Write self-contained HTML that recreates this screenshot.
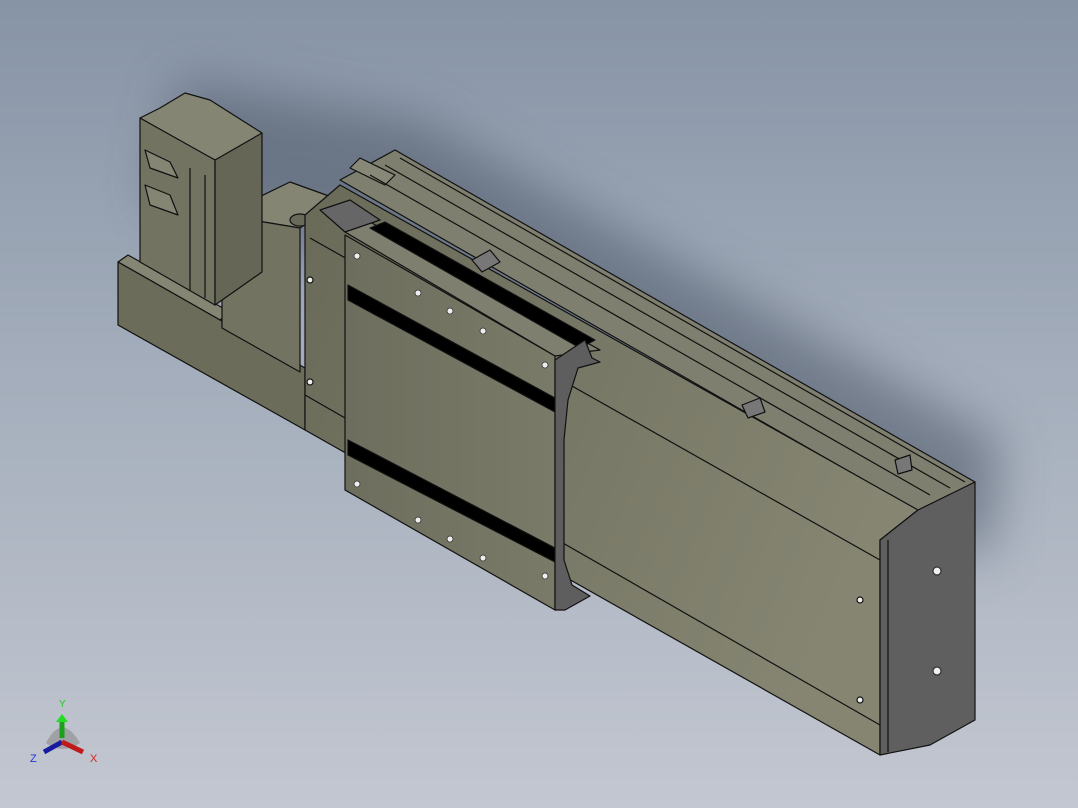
<!DOCTYPE html>
<html><head><style>
html,body{margin:0;padding:0;}
body{width:1078px;height:808px;overflow:hidden;background:linear-gradient(180deg,#8794a6 0%,#a3adbb 45%,#c3c7d1 100%);font-family:"Liberation Sans",sans-serif;}
svg{position:absolute;left:0;top:0;}
</style></head><body>
<svg width="1078" height="808" viewBox="0 0 1078 808">
<defs>
<filter id="bl" x="-20%" y="-20%" width="140%" height="140%"><feGaussianBlur stdDeviation="25"/></filter>
<linearGradient id="face" x1="0" y1="0" x2="1" y2="0.4"><stop offset="0" stop-color="#6a6a59"/><stop offset="1" stop-color="#858572"/></linearGradient>
<linearGradient id="car" x1="0" y1="0" x2="1" y2="0"><stop offset="0" stop-color="#6e6e5e"/><stop offset="1" stop-color="#7a7a68"/></linearGradient>
</defs>
<polygon points="180,80 420,120 1000,440 990,560 300,250 150,200" fill="#4f5a6b" opacity="0.6" filter="url(#bl)"/>
<g stroke="#111" stroke-width="1.2" stroke-linejoin="round">
<polygon points="118,262 128,255 230,312 220,320" fill="#858574"/>
<polygon points="118,262 220,320 305,368 305,430 118,325" fill="#6c6c5b"/>
<polygon points="222,215 290,182 340,200 300,228" fill="#858574"/>
<polygon points="222,215 300,228 300,372 222,328" fill="#737362"/>
<ellipse cx="300" cy="220" rx="10" ry="6" fill="#6a6a5a"/>
<polygon points="140,118 160,108 185,93 210,100 262,133 250,145 215,160 195,150" fill="#858574"/>
<polygon points="140,118 215,160 215,305 140,262" fill="#737362"/>
<polygon points="215,160 262,133 262,272 215,305" fill="#666657"/>
<polygon points="145,150 170,162 178,178 150,168" fill="#858574"/>
<polygon points="145,185 170,195 178,215 150,205" fill="#858574"/>
<line x1="190" y1="168" x2="190" y2="290"/><line x1="205" y1="175" x2="205" y2="298"/>
<polygon points="340,180 395,150 975,482 920,512" fill="#7f7f70"/>
<polygon points="350,168 360,158 395,175 385,185" fill="#888879"/>
<line x1="370" y1="175" x2="930" y2="495"/><line x1="385" y1="165" x2="950" y2="488"/><line x1="400" y1="158" x2="965" y2="482"/>
<polygon points="305,215 340,185 918,510 880,540 880,755 305,430" fill="url(#face)"/>
<line x1="310" y1="238" x2="880" y2="560"/>
<line x1="305" y1="395" x2="880" y2="725"/>
<polygon points="880,540 918,510 975,482 975,720 930,745 880,755" fill="#5f5f5f"/>
<line x1="888" y1="540" x2="888" y2="752"/>
<circle cx="937" cy="571" r="4" fill="#f0f0f0" stroke="#333"/>
<circle cx="937" cy="671" r="4" fill="#f0f0f0" stroke="#333"/>
<circle cx="860" cy="600" r="3" fill="#eee"/><circle cx="860" cy="700" r="3" fill="#eee"/>
<circle cx="310" cy="280" r="3" fill="#eee"/><circle cx="310" cy="382" r="3" fill="#eee"/>
<polygon points="345,232 370,222 600,350 555,356" fill="#7f7f70"/>
<polygon points="370,228 385,222 595,340 580,348" fill="#000"/>
<polygon points="320,210 350,200 380,220 345,232" fill="#666"/>
<polygon points="345,235 555,356 555,610 345,490" fill="url(#car)"/>
<polygon points="348,285 555,398 555,412 348,300" fill="#000"/>
<polygon points="348,440 555,548 555,562 348,455" fill="#000"/>
<polygon points="555,360 585,340 592,358 600,362 578,368 568,400 564,440 564,560 572,585 590,596 565,610 555,610" fill="#5e5e5e"/>
<g fill="#eee" stroke="#333" stroke-width="0.8">
<circle cx="357" cy="256" r="3"/><circle cx="418" cy="293" r="3"/><circle cx="450" cy="311" r="3"/><circle cx="483" cy="331" r="3"/><circle cx="545" cy="365" r="3"/>
<circle cx="357" cy="484" r="3"/><circle cx="418" cy="520" r="3"/><circle cx="450" cy="539" r="3"/><circle cx="483" cy="558" r="3"/><circle cx="545" cy="576" r="3"/>
</g>
<polygon points="472,260 490,250 500,262 482,272" fill="#777"/>
<polygon points="742,405 760,398 765,412 748,418" fill="#777"/>
<polygon points="895,460 910,455 912,470 898,474" fill="#777"/>
</g>
<g>
<path d="M46,743 Q62,712 80,743 Q62,755 46,743Z" fill="#8a8a8a" opacity="0.6"/>
<line x1="62" y1="738" x2="62" y2="720" stroke="#1aa01a" stroke-width="5"/>
<polygon points="56,722 62,714 68,722" fill="#22dd22"/>
<line x1="62" y1="742" x2="44" y2="752" stroke="#1a1aa0" stroke-width="5"/>
<line x1="62" y1="742" x2="83" y2="752" stroke="#c01a1a" stroke-width="5"/>
<text x="59" y="707" font-size="10" fill="#22cc22">Y</text>
<text x="30" y="762" font-size="11" fill="#2233dd">Z</text>
<text x="90" y="762" font-size="11" fill="#dd2222">X</text>
</g>
</svg>
</body></html>
